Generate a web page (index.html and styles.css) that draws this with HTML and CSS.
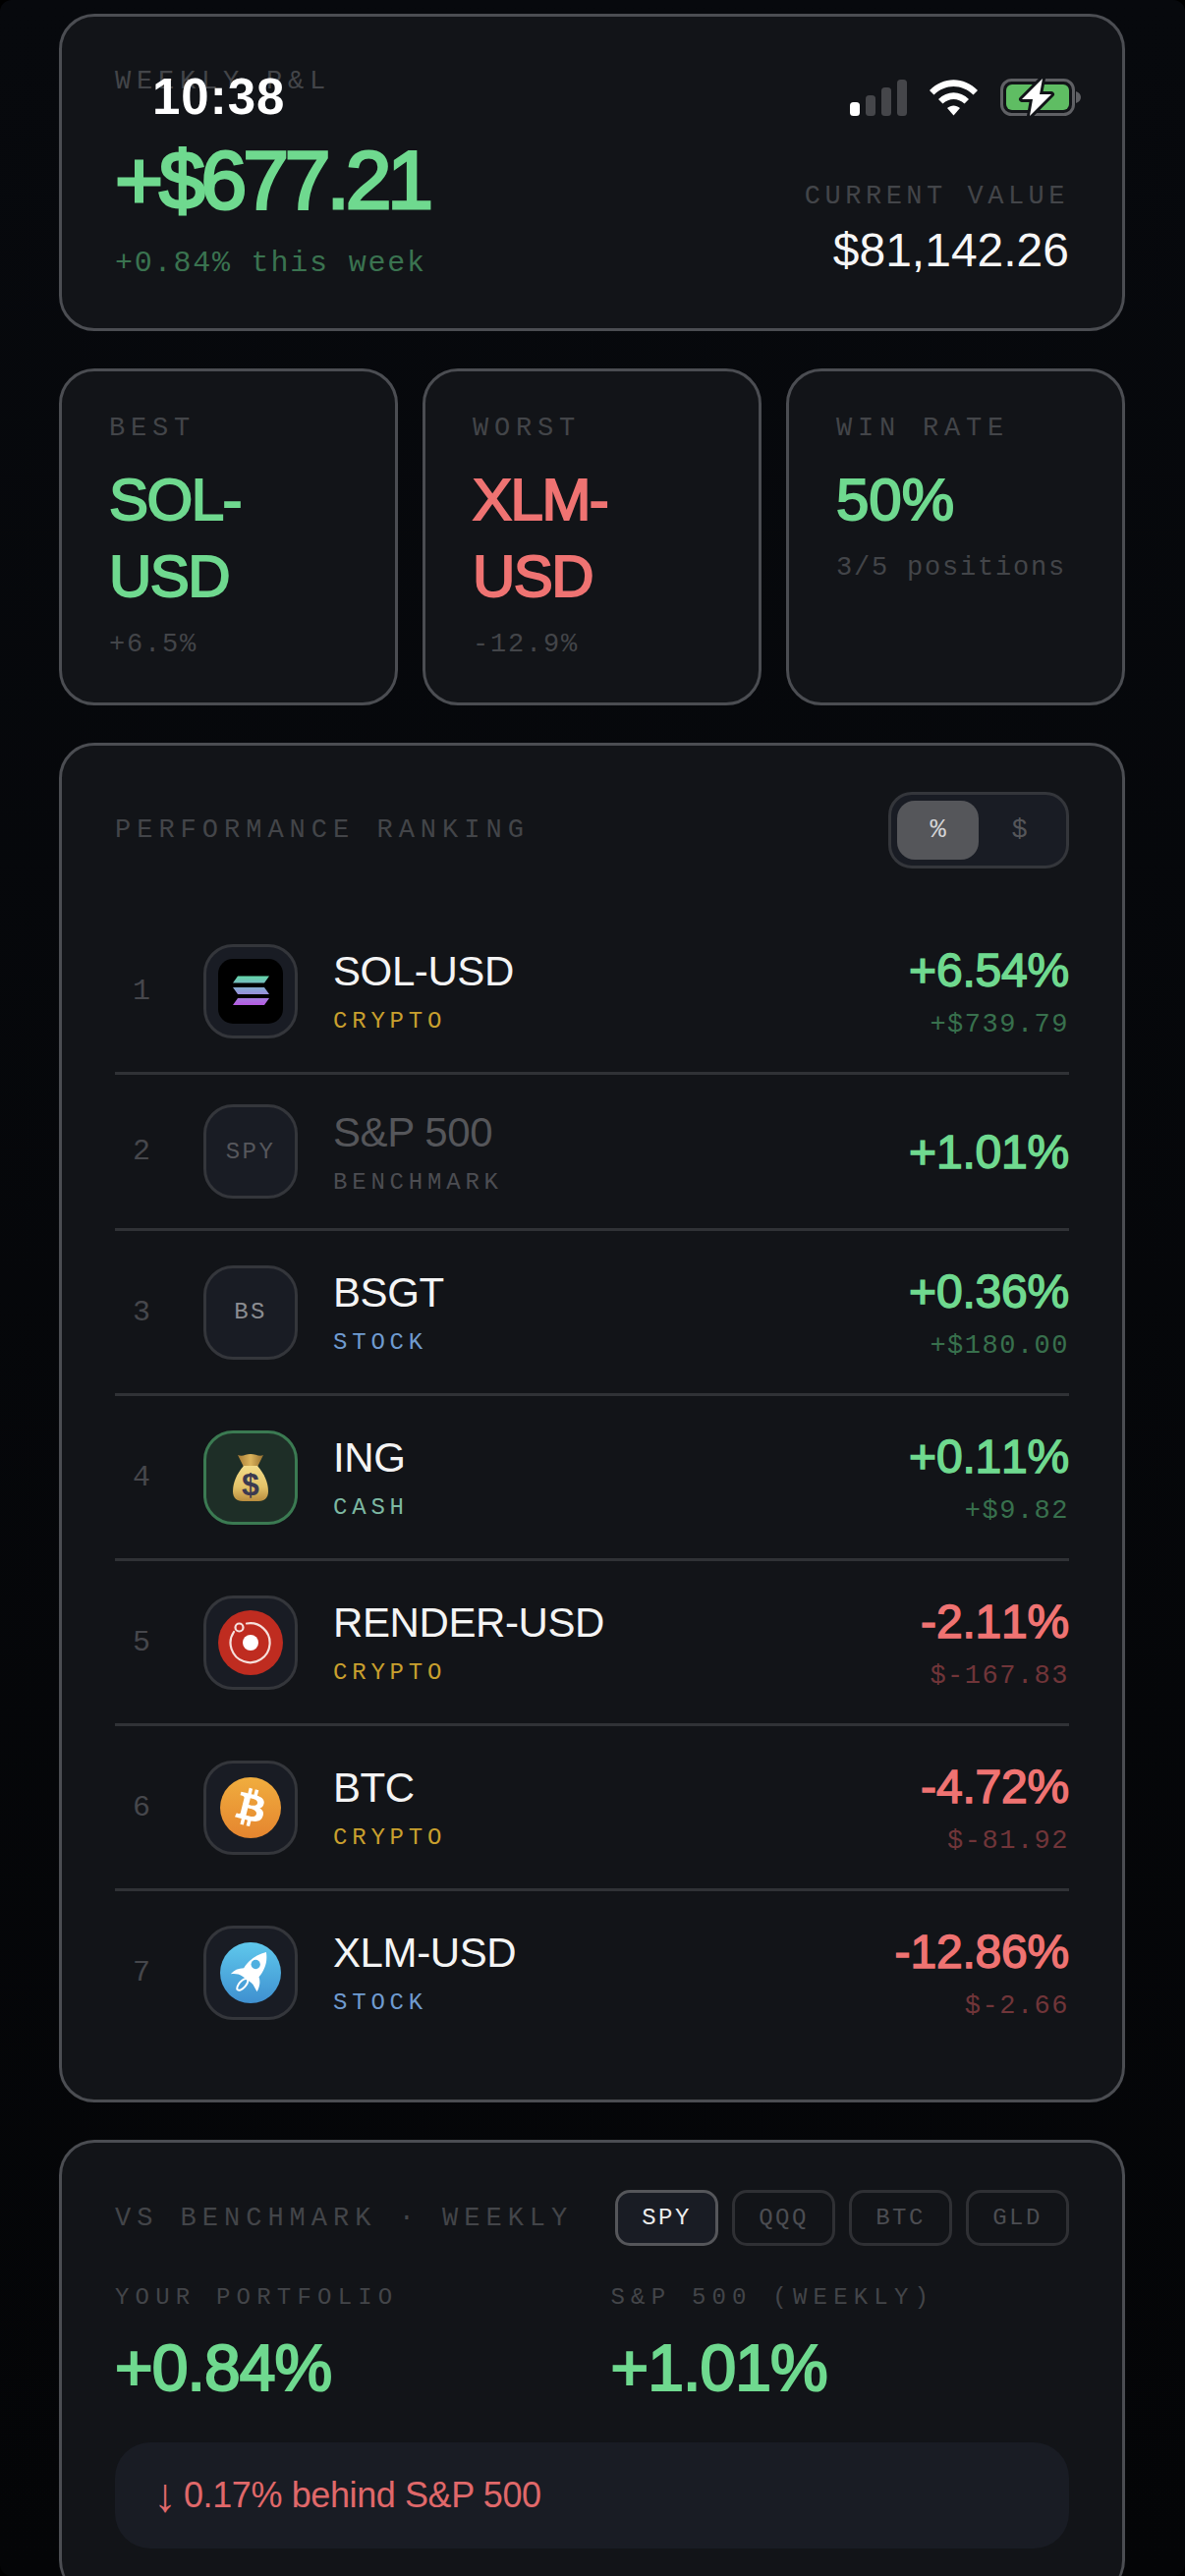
FILE: index.html
```html
<!DOCTYPE html>
<html lang="en">

<head>
  <meta charset="UTF-8">
  <meta name="viewport" content="width=device-width, initial-scale=1.0">
  <title>Weekly P&amp;L</title>
  <link rel="stylesheet" href="styles.css">
</head>

<body>
  <div class="screen">

    <!-- status bar sits over the scrolled page -->
    <div class="status-bar">
      <span class="status-time">10:38</span>
      <div class="status-icons">
        <svg class="icon-signal" width="58" height="37" viewBox="0 0 58 37">
          <rect x="0" y="23" width="10" height="14" rx="3.5" fill="#fff"/>
          <rect x="16" y="16" width="10" height="21" rx="3.5" fill="#45464a"/>
          <rect x="32" y="8" width="10" height="29" rx="3.5" fill="#45464a"/>
          <rect x="48" y="0" width="10" height="37" rx="3.5" fill="#45464a"/>
        </svg>
        <svg class="icon-wifi" width="49" height="37" viewBox="0 0 49 37">
          <path d="M0 11 C14 -3.500 35 -3.500 49 11 L44.500 15.500 C33 4 16 4 4.500 15.500 Z" fill="#fff"/>
          <path d="M9 20 C18 11 31 11 40 20 L35.500 24.500 C29 18.500 20 18.500 13.500 24.500 Z" fill="#fff"/>
          <path d="M18 29 C22 25.500 27 25.500 31 29 L24.500 36.500 Z" fill="#fff"/>
        </svg>
        <svg class="icon-battery" width="82" height="40" viewBox="0 0 82 40">
          <rect x="1.500" y="2.500" width="73" height="35" rx="10" fill="none" stroke="#5f6064" stroke-width="3"/>
          <rect x="6" y="7" width="64" height="26" rx="6" fill="#5fbd63"/>
          <path d="M77 14 C80 15 82 17 82 20 C82 23 80 25 77 26 Z" fill="#5f6064"/>
          <path d="M43 1 L22 22 H33 L30 39 L52 17 H40 Z" fill="#fff" stroke="#121418" stroke-width="6" stroke-linejoin="round" paint-order="stroke"/>
        </svg>
      </div>
    </div>

    <section class="card hero">
      <div>
        <div class="label">WEEKLY P&amp;L</div>
        <div class="hero-value up">+$677.21</div>
        <div class="hero-sub">+0.84% this week</div>
      </div>
      <div class="hero-right">
        <div class="label label-current">CURRENT VALUE</div>
        <div class="hero-total">$81,142.26</div>
      </div>
    </section>

    <section class="stats">
      <div class="card stat">
        <div class="label">BEST</div>
        <div class="stat-value up">SOL-USD</div>
        <div class="stat-sub">+6.5%</div>
      </div>
      <div class="card stat">
        <div class="label">WORST</div>
        <div class="stat-value down">XLM-USD</div>
        <div class="stat-sub">-12.9%</div>
      </div>
      <div class="card stat">
        <div class="label">WIN RATE</div>
        <div class="stat-value stat-num up">50%</div>
        <div class="stat-sub">3/5 positions</div>
      </div>
    </section>

    <section class="card ranking">
      <div class="ranking-head">
        <div class="label">PERFORMANCE RANKING</div>
        <div class="toggle">
          <span class="toggle-btn active">%</span>
          <span class="toggle-btn">$</span>
        </div>
      </div>

      <div class="row">
        <span class="rank">1</span>
        <div class="asset-icon">
          <svg width="66" height="66" viewBox="0 0 66 66">
            <defs>
              <linearGradient id="solGrad" x1="0" y1="0" x2="0" y2="1">
                <stop offset="0" stop-color="#62d6a8"/>
                <stop offset=".5" stop-color="#8f9fd8"/>
                <stop offset="1" stop-color="#b75ae2"/>
              </linearGradient>
            </defs>
            <rect width="66" height="66" rx="15" fill="#000"/>
            <path d="M20 17.500 H52 L47 24.500 H15 Z M15 29 H47 L52 36 H20 Z M20 40 H52 L47 47 H15 Z" fill="url(#solGrad)"/>
          </svg>
        </div>
        <div class="asset">
          <div class="asset-name">SOL-USD</div>
          <div class="asset-type crypto">CRYPTO</div>
        </div>
        <div class="row-right">
          <div class="row-pct up">+6.54%</div>
          <div class="row-amt up-dim">+$739.79</div>
        </div>
      </div>

      <div class="row">
        <span class="rank">2</span>
        <div class="asset-icon asset-code code-dim">SPY</div>
        <div class="asset">
          <div class="asset-name name-dim">S&amp;P 500</div>
          <div class="asset-type bench">BENCHMARK</div>
        </div>
        <div class="row-right">
          <div class="row-pct up">+1.01%</div>
        </div>
      </div>

      <div class="row">
        <span class="rank">3</span>
        <div class="asset-icon asset-code">BS</div>
        <div class="asset">
          <div class="asset-name">BSGT</div>
          <div class="asset-type stock">STOCK</div>
        </div>
        <div class="row-right">
          <div class="row-pct up">+0.36%</div>
          <div class="row-amt up-dim">+$180.00</div>
        </div>
      </div>

      <div class="row">
        <span class="rank">4</span>
        <div class="asset-icon icon-cash">
          <svg width="38" height="50" viewBox="0 0 38 50">
            <defs>
              <linearGradient id="bagGrad" x1="0" y1="0" x2="0" y2="1">
                <stop offset="0" stop-color="#f3dc8a"/>
                <stop offset=".6" stop-color="#e3c268"/>
                <stop offset="1" stop-color="#b98d3e"/>
              </linearGradient>
              <linearGradient id="neckGrad" x1="0" y1="0" x2="1" y2="0">
                <stop offset="0" stop-color="#a67a34"/>
                <stop offset=".5" stop-color="#dcb45c"/>
                <stop offset="1" stop-color="#97702f"/>
              </linearGradient>
            </defs>
            <path d="M6 2 C11 4 14 1 19 1 C24 1 28 4 32 2 L26 14 H12 Z" fill="url(#neckGrad)"/>
            <path d="M12 13 H26 C33 21 37 30 37 39 C37 46 33 49 27 49 H11 C5 49 1 46 1 39 C1 30 5 21 12 13 Z" fill="url(#bagGrad)"/>
            <text x="19" y="43" text-anchor="middle" class="bag-sign">$</text>
          </svg>
        </div>
        <div class="asset">
          <div class="asset-name">ING</div>
          <div class="asset-type cash">CASH</div>
        </div>
        <div class="row-right">
          <div class="row-pct up">+0.11%</div>
          <div class="row-amt up-dim">+$9.82</div>
        </div>
      </div>

      <div class="row">
        <span class="rank">5</span>
        <div class="asset-icon">
          <svg width="66" height="66" viewBox="0 0 66 66">
            <circle cx="33" cy="33" r="33" fill="#bf2c20"/>
            <path d="M29 13.500 A20 20 0 1 1 16 22" fill="none" stroke="#f6e0dc" stroke-width="2.200" stroke-linecap="round"/>
            <circle cx="21.500" cy="17.500" r="4" fill="none" stroke="#f6e0dc" stroke-width="2.200"/>
            <circle cx="33" cy="33" r="8" fill="#fff"/>
          </svg>
        </div>
        <div class="asset">
          <div class="asset-name">RENDER-USD</div>
          <div class="asset-type crypto">CRYPTO</div>
        </div>
        <div class="row-right">
          <div class="row-pct down">-2.11%</div>
          <div class="row-amt down-dim">$-167.83</div>
        </div>
      </div>

      <div class="row">
        <span class="rank">6</span>
        <div class="asset-icon">
          <svg width="62" height="62" viewBox="0 0 24 24">
            <defs>
              <linearGradient id="btcGrad" x1="0" y1="0" x2="0" y2="1">
                <stop offset="0" stop-color="#f0ad3e"/>
                <stop offset="1" stop-color="#e5852f"/>
              </linearGradient>
            </defs>
            <circle cx="12" cy="12" r="12" fill="url(#btcGrad)"/>
            <path fill="#fff" fill-rule="evenodd" d="M17.288 10.291c.24-1.59-.974-2.45-2.64-3.03l.54-2.153-1.315-.33-.525 2.107c-.345-.087-.705-.167-1.064-.25l.526-2.127-1.32-.33-.54 2.165c-.285-.067-.565-.132-.84-.2l-1.815-.45-.35 1.407s.975.225.955.236c.535.136.63.486.615.766l-1.477 5.92c-.075.166-.24.406-.614.314.015.02-.96-.24-.96-.24l-.66 1.51 1.71.426.93.242-.54 2.19 1.32.327.54-2.17c.36.1.705.19 1.05.273l-.51 2.154 1.32.33.545-2.19c2.24.427 3.93.257 4.64-1.774.57-1.637-.03-2.58-1.217-3.196.854-.193 1.5-.76 1.68-1.93h.01zm-3.01 4.22c-.404 1.64-3.157.75-4.05.53l.72-2.9c.896.23 3.757.67 3.33 2.37zm.41-4.24c-.37 1.49-2.662.735-3.405.55l.654-2.64c.744.18 3.137.524 2.75 2.084v.006z"/>
          </svg>
        </div>
        <div class="asset">
          <div class="asset-name">BTC</div>
          <div class="asset-type crypto">CRYPTO</div>
        </div>
        <div class="row-right">
          <div class="row-pct down">-4.72%</div>
          <div class="row-amt down-dim">$-81.92</div>
        </div>
      </div>

      <div class="row">
        <span class="rank">7</span>
        <div class="asset-icon">
          <svg width="62" height="62" viewBox="0 0 185 185">
            <defs>
              <linearGradient id="xlmGrad" x1="0" y1="0" x2="0" y2="1">
                <stop offset="0" stop-color="#5fc8ec"/>
                <stop offset="1" stop-color="#3f90d0"/>
              </linearGradient>
            </defs>
            <circle cx="92.500" cy="92.500" r="92.500" fill="url(#xlmGrad)"/>
            <path d="M140 30 C110 38 85 55 72 78 C55 78 42 84 32 96 C45 94 58 96 66 102 C76 108 90 118 100 128 L112 150 C122 132 122 118 118 105 C135 85 145 60 140 30 Z" fill="#fff"/>
            <circle cx="108" cy="67" r="14" fill="#4fb0e0"/>
            <ellipse cx="68" cy="128" rx="22" ry="10" transform="rotate(-48 68 128)" fill="none" stroke="#fff" stroke-width="6"/>
          </svg>
        </div>
        <div class="asset">
          <div class="asset-name">XLM-USD</div>
          <div class="asset-type stock">STOCK</div>
        </div>
        <div class="row-right">
          <div class="row-pct down">-12.86%</div>
          <div class="row-amt down-dim">$-2.66</div>
        </div>
      </div>
    </section>

    <section class="card bench-card">
      <div class="bench-head">
        <div class="label">VS BENCHMARK · WEEKLY</div>
        <div class="pills">
          <span class="pill active">SPY</span>
          <span class="pill">QQQ</span>
          <span class="pill">BTC</span>
          <span class="pill">GLD</span>
        </div>
      </div>
      <div class="bench-cols">
        <div>
          <div class="bench-label">YOUR PORTFOLIO</div>
          <div class="bench-value up">+0.84%</div>
        </div>
        <div>
          <div class="bench-label">S&amp;P 500 (WEEKLY)</div>
          <div class="bench-value up">+1.01%</div>
        </div>
      </div>
      <div class="bench-note"><span class="note-arrow">↓</span>0.17% behind S&amp;P 500</div>
    </section>

  </div>
</body>
</html>
```

FILE: styles.css
```css
:root {
  --card: #121418;
  --border: #4b4d52;
  --line: #303236;
  --raised: #191c24;
  --muted: #434549;
  --green: #6fd98f;
  --red: #ef7372;
  --mono: "Liberation Mono", monospace;
}
html { background: #000; }
body {
  margin: 0;
  font-family: "Liberation Sans", Arial, sans-serif;
  color: #f4f4f4;
}
.screen {
  position: relative;
  box-sizing: border-box;
  width: 1206px;
  height: 2622px;
  overflow: hidden;
  padding: 14px 61px 0 60px;
  border-radius: 12px;
  background: linear-gradient(#07090d, #040507);
  display: flex;
  flex-direction: column;
  gap: 38px;
}

/* status bar */
.status-bar {
  position: absolute;
  top: 70px; left: 155px;
  width: 945px;
  display: flex;
  justify-content: space-between;
  align-items: center;
}
.status-time {
  font-size: 51px; font-weight: 700;
  line-height: 58px;
  color: #fff;
  letter-spacing: 1px;
}
.status-icons { display: flex; align-items: center; gap: 23px; }

/* shared */
.card {
  flex: none;
  box-sizing: border-box;
  background: var(--card);
  border: 3px solid var(--border);
  border-radius: 36px;
}
.label {
  font: 27px/36px var(--mono);
  letter-spacing: 5.800px;
  color: var(--muted);
  white-space: nowrap;
}
.up { color: var(--green); }
.down { color: var(--red); }
.up-dim { color: #38704d; }
.down-dim { color: #703539; }

/* hero */
.hero {
  display: flex;
  justify-content: space-between;
  align-items: flex-end;
  padding: 48px 54px;
}
.hero-value {
  margin-top: 27px;
  font-size: 84px;
  line-height: 110px;
  letter-spacing: -4.100px;
  font-kerning: none;
  -webkit-text-stroke: 3px currentColor;
}
.hero-sub {
  margin-top: 12px;
  font: 30px/36px var(--mono);
  letter-spacing: 1.800px;
  color: #3a7350;
}
.hero-right { text-align: right; }
.label-current { letter-spacing: 4.500px; }
.hero-total {
  margin-top: 5px;
  font-size: 48px;
  line-height: 63px;
  font-kerning: none;
  color: #f6f6f6;
}

/* stat cards */
.stats {
  flex: none;
  display: grid;
  grid-template-columns: repeat(3, 1fr);
  gap: 25px;
}
.stat { padding: 40px 48px 41px; }
.stat-value {
  margin-top: 16px;
  font-size: 60px;
  line-height: 78px;
  letter-spacing: -1.500px;
  -webkit-text-stroke: 2px currentColor;
}
.stat-num { letter-spacing: 0; }
.stat-sub {
  margin-top: 12px;
  font: 27px/36px var(--mono);
  letter-spacing: 1.800px;
  color: var(--muted);
  white-space: nowrap;
}

/* ranking */
.ranking { padding: 47px 54px 47px; }
.ranking-head {
  display: flex;
  justify-content: space-between;
  align-items: center;
  margin-bottom: 42px;
}
.ranking-head .label { letter-spacing: 6px; }
.toggle {
  display: flex;
  padding: 6px;
  background: var(--raised);
  border: 3px solid #34363b;
  border-radius: 24px;
}
.toggle-btn {
  width: 83px; height: 60px;
  display: flex;
  align-items: center;
  justify-content: center;
  border-radius: 18px;
  font: 27px var(--mono);
  color: #55565a;
}
.toggle-btn.active { background: #55565a; color: #d4d4d6; }

.row {
  display: flex;
  align-items: center;
  padding: 30px 0;
  border-bottom: 3px solid var(--line);
}
.row:last-child { border-bottom: none; }
.rank {
  flex: none;
  width: 54px;
  margin-right: 36px;
  text-align: center;
  font: 30px var(--mono);
  color: #46474c;
}
.asset-icon {
  flex: none;
  box-sizing: border-box;
  width: 96px; height: 96px;
  display: flex;
  align-items: center;
  justify-content: center;
  background: var(--raised);
  border: 3px solid #34363b;
  border-radius: 30px;
}
.asset-code {
  font: 24px var(--mono);
  letter-spacing: 2.400px;
  color: #8b8c91;
}
.code-dim { color: #56575c; }
.icon-cash { background: #1e2e27; border-color: #3b7a52; }
.bag-sign {
  font: 700 32px "Liberation Sans", sans-serif;
  fill: #3b3a50;
}
.asset { flex: 1; margin-left: 36px; }
.asset-name {
  font-size: 42px;
  line-height: 54px;
  letter-spacing: -.4px;
}
.name-dim { color: #55565a; }
.asset-type {
  margin-top: 9px;
  font: 24px/30px var(--mono);
  letter-spacing: 4.800px;
}
.crypto { color: #c9a02e; }
.stock { color: #6f9bd0; }
.cash { color: #7db8a2; }
.bench { color: #4c4d52; }
.row-right { text-align: right; }
.row-pct {
  font-size: 48px;
  line-height: 63px;
  letter-spacing: -.2px;
  font-kerning: none;
  -webkit-text-stroke: 1.500px currentColor;
}
.row-amt {
  margin-top: 6px;
  font: 27px/36px var(--mono);
  letter-spacing: 1.500px;
}

/* benchmark */
.bench-card { flex: 1; padding: 48px 54px; border-bottom: none; }
.bench-head {
  display: flex;
  justify-content: space-between;
  align-items: center;
}
.bench-head .label { letter-spacing: 6px; }
.pills { display: flex; gap: 14px; }
.pill {
  box-sizing: border-box;
  width: 105px; height: 57px;
  display: flex;
  align-items: center;
  justify-content: center;
  font: 24px var(--mono);
  letter-spacing: 2.400px;
  color: #4c4d52;
  border: 3px solid #2f3034;
  border-radius: 15px;
}
.pill.active { background: var(--raised); border-color: #55565a; color: #ececec; }
.bench-cols {
  display: grid;
  grid-template-columns: 1fr 1fr;
  gap: 38px;
  margin-top: 38px;
}
.bench-label {
  font: 24px/30px var(--mono);
  letter-spacing: 6.200px;
  color: var(--muted);
  white-space: nowrap;
}
.bench-value {
  margin-top: 13px;
  font-size: 66px;
  line-height: 86px;
  letter-spacing: -.9px;
  font-kerning: none;
  -webkit-text-stroke: 2.200px currentColor;
}
.bench-note {
  margin-top: 33px;
  box-sizing: border-box;
  height: 108px;
  padding: 0 42px 0 39px;
  display: flex;
  align-items: center;
  background: var(--raised);
  border-radius: 36px;
  font-size: 36px;
  letter-spacing: -.4px;
  color: #e0686a;
}
.note-arrow {
  width: 31px;
  font-size: 48px;
  line-height: 1;
}
```
